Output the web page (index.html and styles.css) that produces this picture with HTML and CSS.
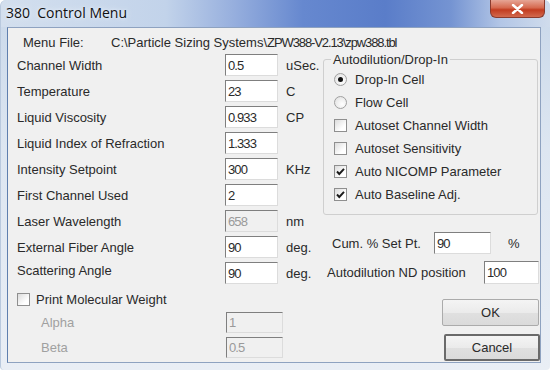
FILE: index.html
```html
<!DOCTYPE html>
<html lang="en">
<head>
    <meta charset="UTF-8">
    <title>380 Control Menu</title>
    <link rel="stylesheet" href="styles.css">
</head>
<body>
    <div class="window">
        <div class="titlebar">
            <span class="title">380&nbsp; Control Menu</span>
            <span class="close">
                <svg width="13" height="10" viewBox="0 0 13 10"><path d="M2 1 L11 9 M11 1 L2 9" stroke="#fff" stroke-width="2.4" stroke-linecap="round"/></svg>
            </span>
        </div>
        <div class="client">
            <div class="menu-file">
                <span class="menu-label">Menu File:</span>
                <span>C:\Particle Sizing Systems\<span class="num">ZPW388-V2.13\zpw388.tbl</span></span>
            </div>
            <div class="columns">
                <div class="left">
                    <div class="fields">
                        <label>Channel Width</label><input class="box" value="0.5"><span class="unit">uSec.</span>
                        <label>Temperature</label><input class="box" value="23"><span class="unit">C</span>
                        <label>Liquid Viscosity</label><input class="box" value="0.933"><span class="unit">CP</span>
                        <label>Liquid Index of Refraction</label><input class="box" value="1.333"><span class="unit"></span>
                        <label>Intensity Setpoint</label><input class="box" value="300"><span class="unit">KHz</span>
                        <label>First Channel Used</label><input class="box" value="2"><span class="unit"></span>
                        <label>Laser Wavelength</label><input class="box" value="658" disabled><span class="unit">nm</span>
                        <label>External Fiber Angle</label><input class="box" value="90"><span class="unit">deg.</span>
                        <label class="raised">Scattering Angle</label><input class="box" value="90"><span class="unit">deg.</span>
                    </div>
                    <div class="check-row print">
                        <span class="check"></span>
                        <span>Print Molecular Weight</span>
                    </div>
                    <div class="sub-fields">
                        <label>Alpha</label><input class="box" value="1" disabled>
                        <label>Beta</label><input class="box" value="0.5" disabled>
                    </div>
                </div>
                <div class="right">
                    <fieldset class="group">
                        <legend>Autodilution/Drop-In</legend>
                        <div class="check-row"><span class="radio on"></span><span>Drop-In Cell</span></div>
                        <div class="check-row"><span class="radio"></span><span>Flow Cell</span></div>
                        <div class="check-row"><span class="check"></span><span>Autoset Channel Width</span></div>
                        <div class="check-row"><span class="check"></span><span>Autoset Sensitivity</span></div>
                        <div class="check-row">
                            <span class="check"><svg width="11" height="11" viewBox="0 0 11 11"><path d="M2 5.5 L4.3 8 L9 2.8" fill="none" stroke="#1a1a1a" stroke-width="1.9"/></svg></span>
                            <span>Auto NICOMP Parameter</span>
                        </div>
                        <div class="check-row">
                            <span class="check"><svg width="11" height="11" viewBox="0 0 11 11"><path d="M2 5.5 L4.3 8 L9 2.8" fill="none" stroke="#1a1a1a" stroke-width="1.9"/></svg></span>
                            <span>Auto Baseline Adj.</span>
                        </div>
                    </fieldset>
                    <div class="setpt">
                        <label>Cum. % Set Pt.</label><input class="box" value="90"><span class="unit">%</span>
                    </div>
                    <div class="nd">
                        <label>Autodilution ND position</label><input class="box" value="100">
                    </div>
                    <div class="buttons">
                        <button class="ok">OK</button>
                        <button class="cancel">Cancel</button>
                    </div>
                </div>
            </div>
        </div>
    </div>
</body>
</html>
```

FILE: styles.css
```css
body {
    margin: 0;
    font-family: "Liberation Sans", Arial, sans-serif;
    font-size: 13px;
    color: #2a2a2a;
    background: #ffffff;
}
.window {
    width: 550px;
    height: 370px;
    box-sizing: border-box;
    padding: 0 9px 7px 6px;
    background: linear-gradient(to bottom, #c9d8ea, #dde6f1 40%, #e9eef5);
    border-radius: 6px 6px 4px 4px;
    border-left: 1px solid #b9c9de;
    display: flex;
    flex-direction: column;
}
.titlebar {
    height: 27px;
    margin: 0 -9px 0 -6px;
    padding-left: 5px;
    display: flex;
    justify-content: space-between;
    background: linear-gradient(to right, #d3dfee 0%, #c2d3ea 30%, #98b0de 42%, #6688cf 55%, #5a7dc9 70%, #7594d2 82%, #b3c6e6 91%, #d0dcec 100%);
    border-radius: 6px 6px 0 0;
}
.title {
    font-family: "Open Sans", "Noto Sans", sans-serif;
    font-size: 14px;
    line-height: 25px;
    color: #111;
    text-shadow: 0 0 6px #e8f0fa, 0 0 3px #e8f0fa;
}
.close {
    width: 55px;
    height: 18px;
    margin-right: 5px;
    box-sizing: border-box;
    border: 1px solid #8a3b2e;
    border-top: none;
    border-radius: 0 0 6px 6px;
    background: linear-gradient(to bottom, #e6a595, #d66a50 45%, #c23c20 58%, #d26a4f);
    display: flex;
    align-items: center;
    justify-content: center;
}
.client {
    flex: 1;
    background: #f0f0f0;
    border: 1px solid #8ea2c0;
    border-left-color: #5f7fae;
    padding: 6px 0 0 9px;
}
.menu-file {
    height: 18px;
    line-height: 18px;
    padding-left: 6px;
    display: flex;
}
.menu-label {
    width: 88px;
}
.num {
    letter-spacing: -1.1px;
}
.columns {
    display: flex;
}
.left {
    width: 306px;
    padding-top: 2px;
}
.fields {
    display: grid;
    grid-template-columns: 208px 53px auto;
    grid-auto-rows: 22px;
    row-gap: 4px;
    align-items: center;
}
.fields .raised {
    align-self: start;
    margin-top: 1px;
}
.unit {
    padding-left: 8px;
}
.box {
    box-sizing: border-box;
    height: 22px;
    margin: 0;
    padding: 0 2px;
    font: inherit;
    letter-spacing: -0.9px;
    color: #2a2a2a;
    background: #ffffff;
    border: 1px solid #dcdcdc;
    border-top-color: #7f7f7f;
    border-left-color: #7f7f7f;
    outline: none;
}
.box:disabled {
    background: #f0f0f0;
    color: #9a9a9a;
}
.check-row {
    display: flex;
    align-items: center;
    gap: 8px;
    height: 23px;
}
.print {
    height: 18px;
    margin-top: 6px;
    gap: 6px;
}
.check {
    width: 13px;
    height: 13px;
    box-sizing: border-box;
    border: 1px solid #8f8f8f;
    background: linear-gradient(135deg, #dcdcdc, #ffffff 70%);
    display: flex;
    align-items: center;
    justify-content: center;
}
.radio {
    width: 13px;
    height: 13px;
    box-sizing: border-box;
    border: 1px solid #a0a0a0;
    border-radius: 50%;
    background: radial-gradient(circle at 65% 65%, #ffffff, #dedede);
    display: flex;
    align-items: center;
    justify-content: center;
}
.radio.on::after {
    content: "";
    width: 5px;
    height: 5px;
    border-radius: 50%;
    background: #111;
}
.sub-fields {
    display: grid;
    grid-template-columns: 209px 57px;
    grid-auto-rows: 21px;
    row-gap: 4px;
    align-items: center;
    margin-top: 4px;
}
.sub-fields label {
    padding-left: 24px;
    color: #a0a0a0;
}
.sub-fields .box {
    height: 21px;
}
.right {
    flex: 1;
}
.group {
    width: 215px;
    box-sizing: border-box;
    margin: 0;
    padding: 1px 0 8px 10px;
    border: 1px solid #cfcfcf;
    border-radius: 3px;
}
.group legend {
    margin-left: -3px;
    padding: 0 2px;
    line-height: 15px;
}
.setpt {
    display: flex;
    align-items: center;
    height: 22px;
    margin-top: 17px;
}
.setpt label {
    width: 102px;
    padding-left: 9px;
}
.setpt .box {
    width: 57px;
}
.setpt .unit {
    padding-left: 17px;
}
.nd {
    display: flex;
    align-items: center;
    height: 23px;
    margin-top: 7px;
}
.nd label {
    width: 157px;
    padding-left: 4px;
}
.nd .box {
    width: 55px;
    height: 23px;
}
.buttons {
    display: flex;
    flex-direction: column;
    align-items: flex-end;
    gap: 8px;
    margin-top: 15px;
}
button {
    width: 97px;
    height: 27px;
    font: inherit;
    color: #2a2a2a;
    border: 1px solid #ababab;
    border-radius: 2px;
    background: linear-gradient(to bottom, #f4f4f4, #ebebeb 50%, #e0e0e0 51%, #dadada);
}
.ok {
    margin-right: 1px;
}
.cancel {
    width: 96px;
    border: 2px solid #6a6a6a;
}
```
